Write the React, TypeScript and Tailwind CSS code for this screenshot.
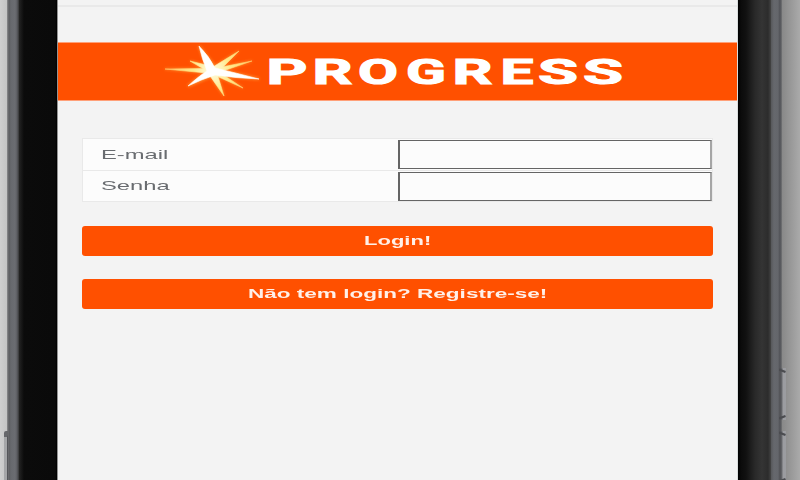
const letters: [string, number, number][] = [
  ["P", 268, 39], ["R", 314, 38], ["O", 359.5, 38], ["G", 407.5, 38],
  ["R", 454, 38], ["E", 502, 31], ["S", 539.5, 38], ["S", 584.5, 38],
];

const yellowRays = [
  "165,69 208,68.5 212,73.5",
  "190,61 214,67 209,72",
  "239,51 208,70 216,74",
  "252,61 212,69 214,74",
  "243,88 216,70 210,73",
  "224,96 208,73 216,70",
];

function Logo() {
  return (
    <svg viewBox="58 43 679 57" className="block h-full w-full" preserveAspectRatio="none">
      <defs>
        <filter id="glow" x="-20%" y="-20%" width="140%" height="140%">
          <feGaussianBlur stdDeviation="1.5" />
        </filter>
        <filter id="soft"><feGaussianBlur stdDeviation="0.45" /></filter>
        <radialGradient id="ray" gradientUnits="userSpaceOnUse" cx="212" cy="71" r="42">
          <stop offset="0" stopColor="#fffde8" />
          <stop offset="0.45" stopColor="#ffe98a" />
          <stop offset="1" stopColor="#ffc868" />
        </radialGradient>
      </defs>
      <g filter="url(#glow)" fill="#ff9a38" stroke="#ff9a38" opacity="0.85">
        {yellowRays.map((p) => <polygon key={p} points={p} />)}
        <polygon points="199,46 217,69 259,79 214,75 188,86 208,70" strokeWidth="2" />
      </g>
      <g filter="url(#soft)">
        {yellowRays.map((p) => <polygon key={p} points={p} fill="url(#ray)" stroke="url(#ray)" strokeWidth="0.6" />)}
        <path d="M199 46Q209 56 215 68Q236 73 259 79Q235 78 215 75Q200 80 188 86Q199 76 207 71Q202 59 199 46Z" fill="#fff" stroke="#fff" strokeWidth="0.6" />
      </g>
      <g fill="#fff" stroke="#fff" strokeWidth="1.1" fontFamily="Roboto, sans-serif" fontWeight="700" fontSize="34.5">
        {letters.map(([c, x, w], i) => (
          <text key={i} x={x - 1.5} y="84.1" textLength={w + 2} lengthAdjust="spacingAndGlyphs">{c}</text>
        ))}
      </g>
    </svg>
  );
}

function Field({ label, type }: { label: string; type: string }) {
  return (
    <label className="flex h-[31.5px] items-center border-b border-[#e9e9e9] bg-[#fcfcfc]">
      <span className="w-[315px] shrink-0 pl-[18px] text-[13.5px] leading-none text-[#696c70]">
        <span className="inline-block origin-left scale-x-[1.76]">{label}</span>
      </span>
      <input type={type} className="mt-px h-[29px] w-[314px] border border-x-2 border-[#656565] border-r-[#a5a5a5] bg-[#fcfcfc] outline-none" />
    </label>
  );
}

const buttonClass =
  "-ml-[0.5px] flex h-[29.5px] w-[631.5px] items-center justify-center rounded-[3px] bg-[#ff5000] pb-px text-[13.5px] leading-none font-bold text-[#fff0e8]";

function VolumeKey({ className }: { className: string }) {
  return (
    <div className={`absolute left-[779px] h-[52px] w-[7px] bg-linear-to-r from-[#55565a] from-30% to-[#9b9ca0] to-60% ${className}`}>
      <svg viewBox="0 0 7 52" className="block h-full w-full" stroke="#4b4c50" strokeWidth="2.2" fill="none">
        <path d="M0 1.5L6.5 4M0 50.5L6.5 48" />
      </svg>
    </div>
  );
}

export default function App() {
  return (
    <div className="relative flex h-[480px] w-[800px] overflow-hidden bg-[#cacaca] font-['Liberation_Sans',Arial,sans-serif]">
      <div className="w-[7px] shrink-0 bg-linear-to-r from-[#cfcfcf] to-[#c4c4c4]" />
      <div className="w-[12px] shrink-0 bg-[linear-gradient(to_right,#8e8e90_0px,#5c5d60_2px,#67696e_4px,#6b6d72_8px,#5c5d62_10px,#343536_12px)]" />
      <div className="w-[38px] shrink-0 bg-[linear-gradient(to_right,#242424_0px,#0b0b0b_5px,#0a0a0a_36px,#000_38px)]" />
      <main className="w-[681px] shrink-0 border-x border-l-[#939393] border-r-[#d9dddd] bg-[#f3f3f3]">
        <div className="h-[7px] border-b-2 border-[#e9e9e9]" />
        <header className="mt-[35px] h-[59px] w-[679px] border-y border-y-[#ffa078] bg-[#ff5000]">
          <Logo />
        </header>
        <form className="mt-[37px] pl-6" onSubmit={(e) => e.preventDefault()}>
          <div className="w-[631px] border border-b-0 border-[#e9e9e9]">
            <Field label="E-mail" type="email" />
            <Field label="Senha" type="password" />
          </div>
          <div className="mt-[24px] flex flex-col gap-[23.5px]">
            <button className={buttonClass}>
              <span className="inline-block scale-x-[1.63]">Login!</span>
            </button>
            <button className={buttonClass}>
              <span className="inline-block scale-x-[1.67]">Não tem login? Registre-se!</span>
            </button>
          </div>
        </form>
      </main>
      <div className="w-[33px] shrink-0 bg-[linear-gradient(to_right,#000_0px,#0b0b0b_3px,#111_8px,#292929_17px,#343434_24px,#2c2c2c_30px,#444_33px)]" />
      <div className="w-[11px] shrink-0 bg-[linear-gradient(to_right,#56575a_0px,#66686d_3px,#64666b_7px,#505156_9px,#737476_11px)]" />
      <div className="flex-1 bg-linear-to-r from-[#888] to-[#aaa]" />
      <VolumeKey className="top-[368px]" />
      <VolumeKey className="top-[431px]" />
      <div className="absolute top-[431px] left-[4px] h-[49px] w-[4px] rounded-tl-[2px] border-t-[6px] border-r border-t-[#66676b] border-r-[#55565a] bg-[#a5a6a8]" />
    </div>
  );
}
